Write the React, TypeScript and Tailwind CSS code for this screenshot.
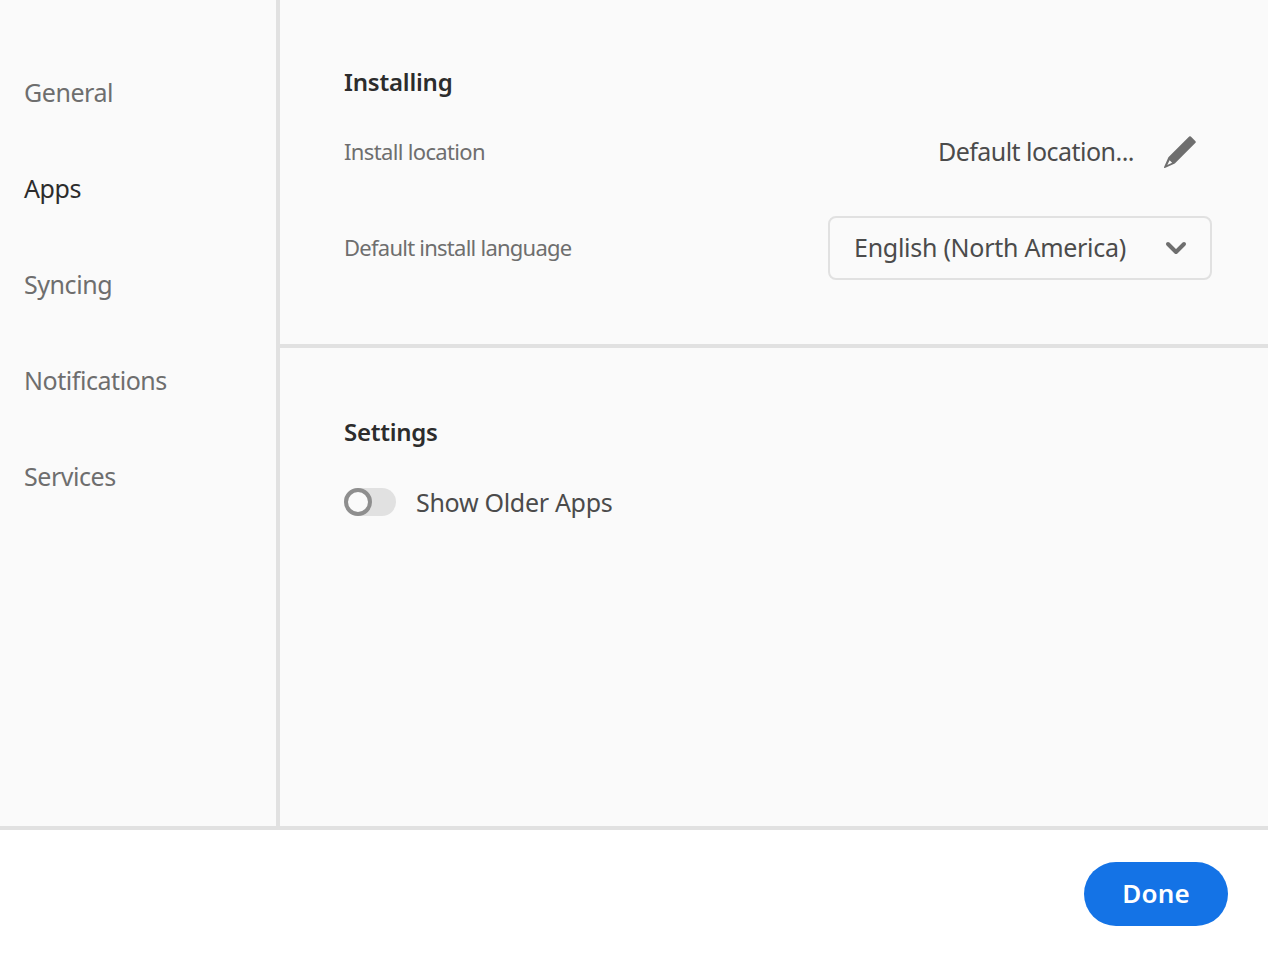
import { ChevronDown } from "lucide-react";

const navItems = ["General", "Apps", "Syncing", "Notifications", "Services"];

function PencilIcon() {
  return (
    <svg viewBox="0 0 32 32" className="w-8 h-8 text-[#6e6e6e]" fill="currentColor">
      <path
        fillRule="evenodd"
        d="M25.2 0.5 Q26 -0.1 26.8 0.5 L31.5 5.2 Q32.1 6 31.5 6.8 L10.8 27.6 L0.9 31.9 Q-0.2 32.1 0.1 31 L4.4 21.2 Z M5.6 24.2 L3.3 29 L8.1 26.8 Z"
      />
    </svg>
  );
}

export default function App() {
  return (
    <div className="w-[1268px] h-[954px] flex flex-col bg-white font-['Noto_Sans',sans-serif] overflow-hidden">
      <div className="h-[830px] flex bg-[#fafafa] border-b-4 border-[#e1e1e1]">
        <nav className="w-[280px] shrink-0 border-r-4 border-[#e1e1e1] pt-[45px] pl-6">
          {navItems.map((item) => (
            <div
              key={item}
              className={`h-24 flex items-center text-[25px] tracking-[-0.45px] ${item === "Apps" ? "text-[#2c2c2c]" : "text-[#6e6e6e]"}`}
            >
              {item}
            </div>
          ))}
        </nav>

        <main className="flex-1 flex flex-col">
          <section className="h-[348px] border-b-4 border-[#e1e1e1] pl-16 pr-14 pt-[64px]">
            <h2 className="h-9 flex items-center text-[24px] font-semibold tracking-[-0.2px] text-[#2c2c2c]">Installing</h2>
            <div className="h-[64px] mt-5 flex items-center justify-between">
              <span className="text-[22px] tracking-[-0.65px] text-[#6e6e6e] pb-[2px]">Install location</span>
              <div className="flex items-center gap-[30px] pr-[16px]">
                <span className="text-[25px] tracking-[-0.53px] text-[#4b4b4b]">Default location...</span>
                <PencilIcon />
              </div>
            </div>
            <div className="h-[64px] mt-8 flex items-center justify-between">
              <span className="text-[22px] tracking-[-0.75px] text-[#6e6e6e] pb-[2px]">Default install language</span>
              <div className="w-[384px] h-[64px] flex items-center justify-between pl-[24px] pr-[18px] border-2 border-[#e1e1e1] rounded-lg">
                <span className="text-[25px] tracking-[-0.27px] text-[#4b4b4b]">English (North America)</span>
                <ChevronDown className="w-8 h-8 text-[#6e6e6e]" strokeWidth={3} />
              </div>
            </div>
          </section>

          <section className="flex-1 pl-16 pt-[66px]">
            <h2 className="h-9 flex items-center text-[24px] font-semibold tracking-[-0.25px] text-[#2c2c2c]">Settings</h2>
            <div className="mt-[35px] h-[36px] flex items-center gap-5">
              <div className="w-[52px] h-[28px] mb-[2px] rounded-full bg-[#e1e1e1]">
                <div className="w-[28px] h-[28px] rounded-full bg-[#fafafa] border-4 border-[#8e8e8e]" />
              </div>
              <span className="text-[25px] tracking-[-0.3px] text-[#4b4b4b]">Show Older Apps</span>
            </div>
          </section>
        </main>
      </div>

      <footer className="flex-1 flex items-start justify-end pt-8 pr-10">
        <button className="w-[144px] h-16 pb-[2px] rounded-full bg-[#1473e6] text-white text-[26px] font-semibold tracking-[0.2px]">
          Done
        </button>
      </footer>
    </div>
  );
}
